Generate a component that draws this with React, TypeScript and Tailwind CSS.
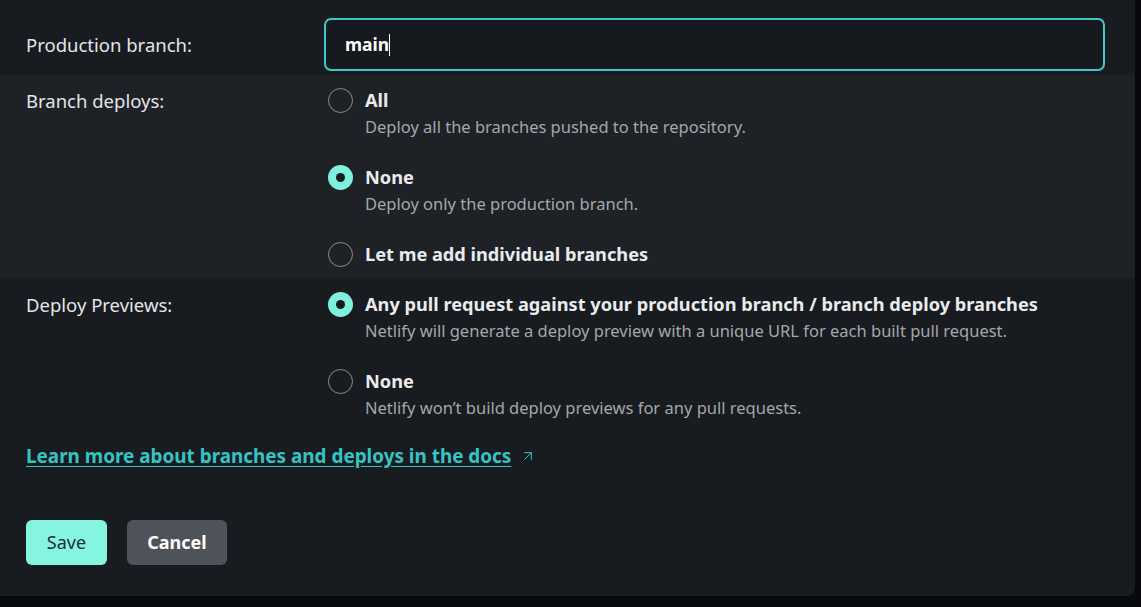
import { ArrowUpRight } from "lucide-react";

type Option = { title: string; desc?: string; checked?: boolean };

const branchOptions: Option[] = [
  { title: "All", desc: "Deploy all the branches pushed to the repository." },
  { title: "None", desc: "Deploy only the production branch.", checked: true },
  { title: "Let me add individual branches" },
];

const previewOptions: Option[] = [
  {
    title: "Any pull request against your production branch / branch deploy branches",
    desc: "Netlify will generate a deploy preview with a unique URL for each built pull request.",
    checked: true,
  },
  { title: "None", desc: "Netlify won\u2019t build deploy previews for any pull requests." },
];

function Radio({ checked }: { checked?: boolean }) {
  if (checked) {
    return (
      <span className="flex h-[25px] w-[25px] shrink-0 items-center justify-center rounded-full bg-[#7ef0dd]">
        <span className="h-[9px] w-[9px] rounded-full bg-[#181b1f]" />
      </span>
    );
  }
  return <span className="h-[25px] w-[25px] shrink-0 rounded-full border border-[#8a8e93]" />;
}

function OptionList({ options }: { options: Option[] }) {
  return (
    <div className="flex flex-col gap-[26px]">
      {options.map((o) => (
        <label key={o.title} className="flex gap-3 pl-[4px]">
          <Radio checked={o.checked} />
          <div className="flex flex-col">
            <span className="text-[18.2px] font-bold leading-[25px] text-[#e9ebee]">{o.title}</span>
            {o.desc && (
              <span className="mt-[2px] text-[16.5px] leading-[24px] text-[#a3a7ab]">{o.desc}</span>
            )}
          </div>
        </label>
      ))}
    </div>
  );
}

export default function App() {
  return (
    <div
      className="h-[607px] w-[1141px] overflow-hidden bg-[#07090c]"
      style={{ fontFamily: '"Noto Sans", "Open Sans", sans-serif' }}
    >
      <div className="h-[596px] w-[1135px] rounded-br-[8px] bg-[#181b1f]">
        <div className="grid grid-cols-[298px_1fr] items-center px-[26px] pt-[18px] pb-[4px]">
          <span className="text-[18.5px] text-[#e3e5e8]">Production branch:</span>
          <div className="mr-[4px] flex h-[53px] items-center rounded-[7px] border-2 border-[#3ec8c8] bg-[#16191d] px-[19px]">
            <span className="text-[17.5px] font-bold text-white">main</span>
            <span className="h-[22px] w-px bg-white" />
          </div>
        </div>

        <div className="grid grid-cols-[298px_1fr] bg-[#1e2125] px-[26px] pt-[13px] pb-[11px]">
          <span className="text-[18.5px] leading-[25px] text-[#e3e5e8]">Branch deploys:</span>
          <OptionList options={branchOptions} />
        </div>

        <div className="grid grid-cols-[298px_1fr] px-[26px] pt-[14px]">
          <span className="text-[18.5px] leading-[25px] text-[#e3e5e8]">Deploy Previews:</span>
          <OptionList options={previewOptions} />
        </div>

        <div className="mt-[22px] flex items-center gap-[9px] px-[26px]">
          <a className="text-[18.9px] font-bold text-[#35c4c4] underline underline-offset-[3px]">
            Learn more about branches and deploys in the docs
          </a>
          <ArrowUpRight className="h-[16px] w-[16px] text-[#35c4c4]" strokeWidth={1.5} />
        </div>

        <div className="mt-[50px] flex gap-[20px] px-[26px]">
          <button className="h-[45px] w-[81px] rounded-[6px] bg-[#86f5df] text-[18px] text-[#173036]">
            Save
          </button>
          <button className="h-[45px] w-[100px] rounded-[6px] bg-[#4e5259] text-[18px] font-bold text-white">
            Cancel
          </button>
        </div>
      </div>
    </div>
  );
}
